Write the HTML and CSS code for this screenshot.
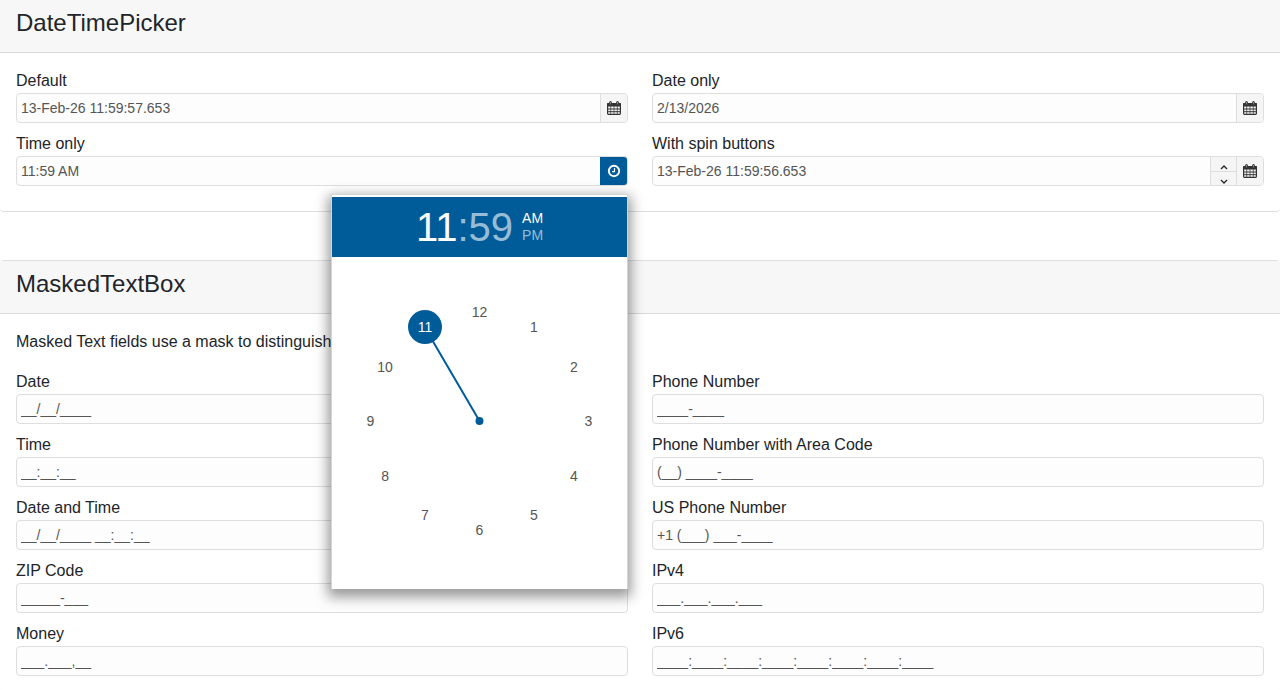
FILE: index.html
```
<!DOCTYPE html>
<html lang="en">
<head>
<meta charset="UTF-8">
<meta name="viewport" content="width=device-width, initial-scale=1.0">
<title>Inputs</title>
<link rel="stylesheet" href="styles.css">
</head>
<body>

<!-- icons used by the picker buttons -->
<svg class="sprite" aria-hidden="true">
<symbol id="icon-calendar" viewBox="0 0 14 14">
<rect x=".6" y="2.600" width="12.800" height="10.800" rx=".8" fill="none" stroke="currentColor" stroke-width="1.200"/>
<path fill="currentColor" d="M0 3a1 1 0 0 1 1-1h12a1 1 0 0 1 1 1v2.500H0z"/>
<path fill="none" stroke="currentColor" d="M.5 8h13M.5 10.700h13"/>
<path fill="none" stroke="currentColor" stroke-width=".7" d="M3.700 5v8M7 5v8M10.300 5v8"/>
<rect x="2.500" y=".5" width="2" height="3.500" rx="1" fill="#888" stroke="currentColor"/>
<rect x="9.500" y=".5" width="2" height="3.500" rx="1" fill="#888" stroke="currentColor"/>
</symbol>
<symbol id="icon-clock" viewBox="0 0 14 14">
<circle cx="7" cy="7" r="5.200" fill="none" stroke="currentColor" stroke-width="1.900"/>
<path fill="none" stroke="currentColor" stroke-width="1.200" d="M7.500 4v3.600H5"/>
</symbol>
<symbol id="icon-up" viewBox="0 0 8 6">
<path fill="none" stroke="currentColor" stroke-width="1.300" d="M1 4l3-3 3 3"/>
</symbol>
<symbol id="icon-down" viewBox="0 0 8 6">
<path fill="none" stroke="currentColor" stroke-width="1.300" d="M1 1l3 3 3-3"/>
</symbol>
</svg>

<main>
<section class="card">
<div class="card-header">
<h2>DateTimePicker</h2>
</div>
<div class="card-body">
<div class="fields">
<div class="field">
<label for="default">Default</label>
<div class="picker">
<input type="text" id="default" value="13-Feb-26 11:59:57.653">
<button type="button" class="picker-button" aria-label="Open calendar"><svg class="icon"><use href="#icon-calendar"/></svg></button>
</div>
</div>
<div class="field">
<label for="dateOnly">Date only</label>
<div class="picker">
<input type="text" id="dateOnly" value="2/13/2026">
<button type="button" class="picker-button" aria-label="Open calendar"><svg class="icon"><use href="#icon-calendar"/></svg></button>
</div>
</div>
<div class="field">
<label for="timeOnly">Time only</label>
<div class="picker">
<input type="text" id="timeOnly" value="11:59 AM">
<button type="button" class="picker-button active" aria-label="Open clock"><svg class="icon"><use href="#icon-clock"/></svg></button>
</div>
<div class="clock-popup">
<div class="clock-header">
<div class="clock-time"><span class="selected">11</span>:59</div>
<div class="clock-meridian">
<button type="button" class="selected">AM</button>
<button type="button">PM</button>
</div>
</div>
<div class="clock-dial">
<svg class="clock-hand" viewBox="0 0 296 332">
<path d="M148 164L93 70" stroke="currentColor" stroke-width="2"/>
<circle cx="148" cy="164" r="4" fill="currentColor"/>
</svg>
<button type="button" class="hour" style="--hour: 12">12</button>
<button type="button" class="hour" style="--hour: 1">1</button>
<button type="button" class="hour" style="--hour: 2">2</button>
<button type="button" class="hour" style="--hour: 3">3</button>
<button type="button" class="hour" style="--hour: 4">4</button>
<button type="button" class="hour" style="--hour: 5">5</button>
<button type="button" class="hour" style="--hour: 6">6</button>
<button type="button" class="hour" style="--hour: 7">7</button>
<button type="button" class="hour" style="--hour: 8">8</button>
<button type="button" class="hour" style="--hour: 9">9</button>
<button type="button" class="hour" style="--hour: 10">10</button>
<button type="button" class="hour selected" style="--hour: 11">11</button>
</div>
</div>
</div>
<div class="field">
<label for="spin">With spin buttons</label>
<div class="picker">
<input type="text" id="spin" value="13-Feb-26 11:59:56.653">
<div class="spin-buttons">
<button type="button" aria-label="Increase"><svg class="arrow"><use href="#icon-up"/></svg></button>
<button type="button" aria-label="Decrease"><svg class="arrow"><use href="#icon-down"/></svg></button>
</div>
<button type="button" class="picker-button" aria-label="Open calendar"><svg class="icon"><use href="#icon-calendar"/></svg></button>
</div>
</div>
</div>
</div>
</section>

<section class="card">
<div class="card-header">
<h2>MaskedTextBox</h2>
</div>
<div class="card-body">
<p>Masked Text fields use a mask to distinguish</p>
<div class="fields">
<div class="field">
<label for="date">Date</label>
<div class="picker"><input type="text" id="date" value="__/__/____"></div>
</div>
<div class="field">
<label for="phone">Phone Number</label>
<div class="picker"><input type="text" id="phone" value="____-____"></div>
</div>
<div class="field">
<label for="time">Time</label>
<div class="picker"><input type="text" id="time" value="__:__:__"></div>
</div>
<div class="field">
<label for="areaPhone">Phone Number with Area Code</label>
<div class="picker"><input type="text" id="areaPhone" value="(__) ____-____"></div>
</div>
<div class="field">
<label for="dateTime">Date and Time</label>
<div class="picker"><input type="text" id="dateTime" value="__/__/____ __:__:__"></div>
</div>
<div class="field">
<label for="usPhone">US Phone Number</label>
<div class="picker"><input type="text" id="usPhone" value="+1 (___) ___-____"></div>
</div>
<div class="field">
<label for="zip">ZIP Code</label>
<div class="picker"><input type="text" id="zip" value="_____-___"></div>
</div>
<div class="field">
<label for="ipv4">IPv4</label>
<div class="picker"><input type="text" id="ipv4" value="___.___.___.___"></div>
</div>
<div class="field">
<label for="money">Money</label>
<div class="picker"><input type="text" id="money" value="___.___,__"></div>
</div>
<div class="field">
<label for="ipv6">IPv6</label>
<div class="picker"><input type="text" id="ipv6" value="____:____:____:____:____:____:____:____"></div>
</div>
</div>
</div>
</section>
</main>

</body>
</html>
```
FILE: styles.css
```
* {
box-sizing: border-box;
}

body {
margin: 0;
background-color: #fff;
color: #212529;
font-family: "Liberation Sans", Arial, sans-serif;
font-size: 16px;
line-height: 24px;
}

button {
padding: 0;
border: 0;
background: none;
color: inherit;
font: inherit;
cursor: pointer;
}

.sprite {
display: none;
}

.card {
border: 1px solid #dfdfdf;
border-width: 1px 0;
border-radius: 4px;
}

.card + .card {
margin-top: 48px;
}

.card:first-child {
border-top: 0;
}

.card-header {
padding: 9px 16px 15px;
border-bottom: 1px solid #d9d9d9;
background-color: #f7f7f7;
}

h2 {
margin: 0;
font-size: 24px;
font-weight: 400;
line-height: 28px;
}

.card-body {
padding: 16px 16px 7px;
}

.card:first-child .card-body {
padding-bottom: 16px;
}

p {
margin: 0 0 16px;
}

.fields {
display: grid;
grid-template-columns: 1fr 1fr;
column-gap: 24px;
}

.field {
position: relative;
margin-bottom: 9px;
}

label {
display: block;
}

/* text box with its buttons */
.picker {
display: flex;
height: 30px;
border: 1px solid #dedede;
border-radius: 4px;
background-color: #fdfdfd;
overflow: hidden;
}

.picker input {
flex: 1;
min-width: 0;
padding: 1px 4px;
border: 0;
outline: 0;
background: none;
color: #555;
font-family: inherit;
font-size: 14px;
}

.picker-button {
display: flex;
align-items: center;
justify-content: center;
width: 27px;
border-left: 1px solid #dedede;
background-color: #f5f5f5;
color: #333;
}

.picker-button.active {
border-color: #005b99;
background-color: #005b99;
color: #fff;
}

.icon {
width: 14px;
height: 14px;
}

.spin-buttons {
display: grid;
grid-template-rows: 1fr 1fr;
width: 26px;
border-left: 1px solid #dedede;
background-color: #f5f5f5;
}

.spin-buttons button {
display: flex;
align-items: flex-end;
justify-content: center;
}

.spin-buttons button + button {
border-top: 1px solid #dedede;
}

.arrow {
width: 8px;
height: 6px;
}

/* time popup */
.clock-popup {
position: absolute;
z-index: 1;
top: 62px;
right: 0;
width: 297px;
padding-top: 2px;
border: 1px solid #d5d5d5;
border-width: 1px 1px 0;
background-color: #fff;
box-shadow: 0 5px 12px 3px rgba(0, 0, 0, 0.4);
}

.clock-header {
display: flex;
align-items: center;
justify-content: center;
gap: 9px;
height: 60px;
background-color: #005b99;
color: rgba(255, 255, 255, 0.6);
}

.clock-time {
font-size: 40px;
line-height: 40px;
}

.clock-meridian {
display: grid;
font-size: 14px;
line-height: 17px;
}

.clock-header .selected {
color: #fff;
}

.clock-dial {
position: relative;
height: 332px;
color: #005b99;
}

.clock-hand {
display: block;
width: 100%;
height: 100%;
}

.hour {
position: absolute;
left: calc(50% - 17px + 109px * sin(var(--hour) * 30deg));
top: calc(147px - 109px * cos(var(--hour) * 30deg));
width: 34px;
height: 34px;
border-radius: 50%;
color: #555;
font-size: 14px;
}

.hour.selected {
background-color: #005b99;
color: #fff;
}
```
